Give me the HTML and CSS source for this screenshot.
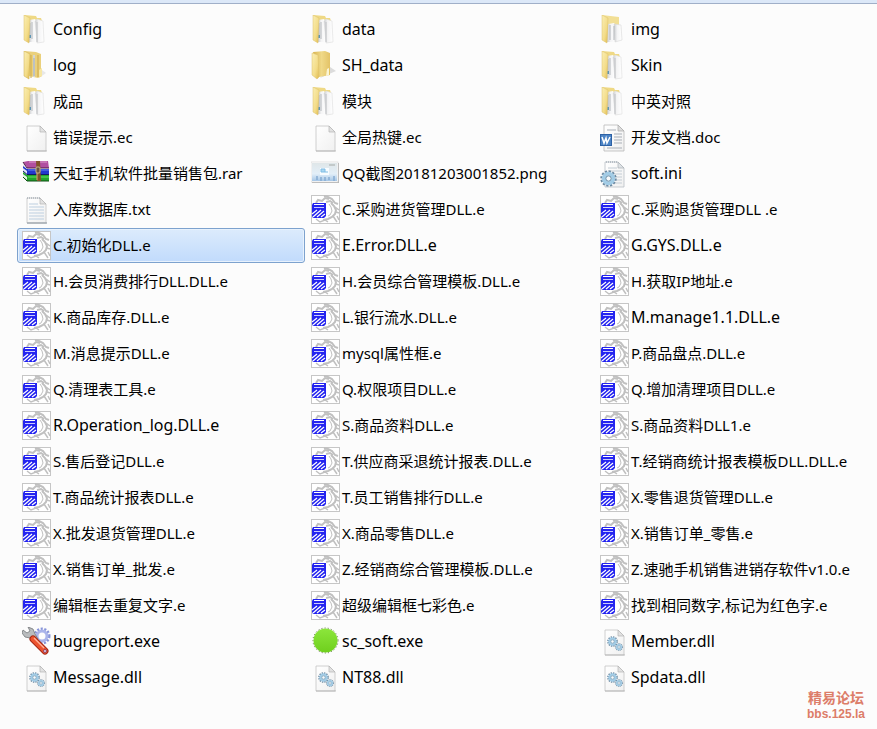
FILE: index.html
```html
<!DOCTYPE html>
<html lang="zh-CN">
<head>
  <meta charset="UTF-8">
  <meta name="viewport" content="width=device-width, initial-scale=1.0">
  <title>文件列表</title>
  <link rel="stylesheet" href="styles.css">
</head>
<body>
  <!-- icon set -->
  <svg class="defs" aria-hidden="true">
    <defs>
      <linearGradient id="flap" x1="0" y1="0" x2="1" y2="1">
        <stop offset="0" stop-color="#faeeb4"/>
        <stop offset="0.6" stop-color="#f3dc88"/>
        <stop offset="1" stop-color="#dfb94e"/>
      </linearGradient>
      <linearGradient id="gold" x1="0" y1="0" x2="1" y2="0">
        <stop offset="0" stop-color="#d9b450"/>
        <stop offset="0.5" stop-color="#f0d988"/>
        <stop offset="1" stop-color="#e3c367"/>
      </linearGradient>
      <linearGradient id="sheet" x1="0" y1="0" x2="1" y2="1">
        <stop offset="0" stop-color="#ffffff"/>
        <stop offset="1" stop-color="#f0f0f0"/>
      </linearGradient>
      <linearGradient id="paper" x1="0" y1="0" x2="1" y2="0">
        <stop offset="0" stop-color="#c9cbce"/>
        <stop offset="0.4" stop-color="#f4f4f5"/>
        <stop offset="1" stop-color="#ffffff"/>
      </linearGradient>
      <linearGradient id="green" x1="0" y1="0" x2="0" y2="1">
        <stop offset="0" stop-color="#8ce63c"/>
        <stop offset="1" stop-color="#6fcf1d"/>
      </linearGradient>
      <linearGradient id="shot" x1="0" y1="0" x2="0" y2="1">
        <stop offset="0" stop-color="#dfe6e8"/>
        <stop offset="0.6" stop-color="#e3eff8"/>
        <stop offset="1" stop-color="#a5c6e6"/>
      </linearGradient>
    </defs>

    <symbol id="folder-files" viewBox="0 0 29 29">
      <path d="M2 0L14 1L15 3H19L20 6V24L7 25Z" fill="#efd985"/>
      <path d="M7 5L13 4L15 7V27L7 27Z" fill="url(#paper)"/>
      <path d="M8 8V23M10 7V24" stroke="#b4b8bc"/>
      <path d="M8 20V23" stroke="#5e96b5" stroke-width="2"/>
      <path d="M13 6L15 4L21 6L22 27L15 28Z" fill="url(#paper)" stroke="#dedede" stroke-width="0.6"/>
      <path d="M15 7V27" stroke="#bfc1c4"/>
      <path d="M2 0L8 3L7 28L2 25Z" fill="url(#flap)" stroke="#dcc06a" stroke-width="0.5"/>
    </symbol>

    <symbol id="folder-log" viewBox="0 0 29 29">
      <path d="M17 27L24 22L20 19Z" fill="#e8e8e8"/>
      <path d="M2 0L14 1L19 3V17L20 25L16 27L7 25Z" fill="#ead07c"/>
      <path d="M9 4V27M16 4V26" stroke="#cfa946"/>
      <path d="M12 4V26" stroke="#d5d6d2" stroke-width="2"/>
      <path d="M12 7V25" stroke="#a5adb4"/>
      <path d="M17 19L20 17V25L17 26Z" fill="#f7e7a6"/>
      <path d="M2 0L8 3L7 28L2 25Z" fill="url(#flap)" stroke="#cfae4c" stroke-width="0.5"/>
    </symbol>

    <symbol id="folder-plain" viewBox="0 0 29 29">
      <path d="M9 27L25 20L19 16Z" fill="#dcdcdc"/>
      <path d="M2 1L14 0L19 2V24L8 26Z" fill="url(#gold)"/>
      <path d="M16 18L18 17V24L15 25Z" fill="#fbf5d4"/>
      <path d="M1 2L7 4L8 26L6 28L1 24Z" fill="url(#flap)" stroke="#dcc06a" stroke-width="0.5"/>
    </symbol>

    <symbol id="folder-tall" viewBox="0 0 29 29">
      <path d="M2 0L19 2V22L7 25Z" fill="#f2df95"/>
      <path d="M8 9L14 8L16 11V27L7 27Z" fill="url(#paper)"/>
      <path d="M14 9L21 10L22 25L15 27Z" fill="url(#paper)" stroke="#d8d8d8" stroke-width="0.6"/>
      <path d="M10 10V25M14 11V25" stroke="#b2b5b9"/>
      <path d="M2 0L8 3L7 28L2 25Z" fill="url(#flap)" stroke="#dcc06a" stroke-width="0.5"/>
    </symbol>

    <symbol id="page" viewBox="0 0 29 29">
      <path d="M5 3H18L24 9V28H5Z" fill="url(#sheet)" stroke="#c4c4c4" stroke-width="0.8"/>
      <path d="M5 28H25" stroke="#a9a9a9" stroke-width="0.7"/>
      <path d="M18 3V9H24Z" fill="#e2e2e2" stroke="#b5b5b5" stroke-width="0.7"/>
    </symbol>

    <symbol id="text" viewBox="0 0 29 29">
      <use href="#page"/>
      <path d="M7 9H16M7 12H22M7 15H22M7 18H22M7 21H22M7 24H22" stroke="#bdcfe0"/>
      <path d="M5 3H18" stroke="#8d9aa6" stroke-dasharray="1 1"/>
      <path d="M5 28H25" stroke="#9aa5af"/>
    </symbol>

    <symbol id="word" viewBox="0 0 29 29">
      <path d="M4 2H18L24 8V28H4Z" fill="url(#sheet)" stroke="#b9b9b9" stroke-width="0.8"/>
      <path d="M18 2V8H24Z" fill="#dddddd" stroke="#ababab" stroke-width="0.7"/>
      <path d="M7 7H16M14 11H22M14 14H22M14 17H22M14 20H22M7 25H22" stroke="#a9afb7"/>
      <rect x="0" y="11" width="12" height="12" fill="#2d61a5"/>
      <rect x="1" y="12" width="10" height="10" fill="#4b83c5"/>
      <path d="M2 14L4 20L6 15L7 20L10 14" fill="none" stroke="#ffffff" stroke-width="1.500"/>
    </symbol>

    <symbol id="gear" viewBox="0 0 16 16">
      <circle cx="8" cy="8" r="6.500" fill="none" stroke="#6c8aa2" stroke-width="2.500" stroke-dasharray="2 1.400"/>
      <circle cx="8" cy="8" r="4.500" fill="none" stroke="#a2cce6" stroke-width="3.500"/>
      <circle cx="8" cy="8" r="2.500" fill="#f7fafc" stroke="#5f87a3" stroke-width="0.9"/>
    </symbol>

    <symbol id="settings" viewBox="0 0 29 29">
      <path d="M5 3H18L24 9V28H5Z" fill="url(#sheet)" stroke="#b9bfc5" stroke-width="0.8"/>
      <path d="M18 3V9H24Z" fill="#dfe3e6" stroke="#a9afb4" stroke-width="0.7"/>
      <path d="M6 3H18" stroke="#8d9aa6" stroke-dasharray="1 1"/>
      <path d="M8 9H17M8 12H22M12 15H22M14 18H22M14 21H22M14 24H22" stroke="#c3ccd4"/>
      <use href="#gear" x="0" y="11" width="17" height="17"/>
    </symbol>

    <symbol id="dll" viewBox="0 0 29 29">
      <use href="#page"/>
      <use href="#gear" x="7" y="9" width="11" height="11"/>
      <use href="#gear" x="15" y="16" width="8" height="8"/>
    </symbol>

    <symbol id="archive" viewBox="0 0 29 29">
      <path d="M1 3L6 2H26L27 9H5Z" fill="#b14fa0"/>
      <path d="M7 3H25" stroke="#dc9dcb"/>
      <path d="M1 3L5 8V10L1 7Z" fill="#ece6ea"/>
      <path d="M1 7L5 10H27V15H5L1 12Z" fill="#2238cc"/>
      <path d="M6 11H27" stroke="#6a84f2"/>
      <path d="M1 9L5 12V15L1 12Z" fill="#dfe4f7"/>
      <path d="M1 13L5 16H27V22H5L1 18Z" fill="#22a52c"/>
      <path d="M6 18H27" stroke="#66e366"/>
      <path d="M1 15L5 18V21L1 18Z" fill="#e1f2e2"/>
      <path d="M1 3L5 9H27" fill="none" stroke="#4c1a45"/>
      <path d="M1 12L5 15.500H27" fill="none" stroke="#101a66"/>
      <path d="M1 18L5 22H27" fill="none" stroke="#0c4a12"/>
      <path d="M14 2H18L19 22H15Z" fill="#80532a"/>
      <path d="M15 13V21" stroke="#d7a868"/>
      <rect x="14" y="8" width="4" height="6" rx="1" fill="#69563f" stroke="#c9b78c"/>
    </symbol>

    <symbol id="image" viewBox="0 0 29 29">
      <rect x="1" y="4" width="27" height="20" fill="#b5b5b5"/>
      <rect x="0" y="3" width="27" height="20" fill="#ffffff" stroke="#d0d0d0" stroke-width="0.6"/>
      <rect x="1" y="4" width="25" height="18" fill="url(#shot)"/>
      <rect x="9" y="9" width="9" height="7" fill="#f8fcff"/>
      <path d="M10 10H14V13H10ZM14 13H17" stroke="#80bde4" fill="#a9d7f2"/>
      <path d="M18 6H24" stroke="#a5aaa8"/>
      <path d="M6 17V21M10 18V22M14 18V22M18 18V21M23 17V22" stroke="#87acd2" stroke-width="1.500"/>
    </symbol>

    <!-- .e source file: grey dragon with the blue block in front -->
    <symbol id="esource" viewBox="0 0 29 29">
      <rect x="0.5" y="0.5" width="28" height="28" fill="#ffffff" stroke="#c6c6c6"/>
      <g fill="none" stroke="#c0c0c0">
        <path d="M5 8L7 5L11 6L14 3L18 4" stroke-width="2"/>
        <path d="M13 1L17 2L21 4L24 8L27 9" stroke-width="2"/>
        <path d="M15 7L19 6L22 8" stroke-width="2"/>
        <path d="M20 8L23 11L25 15L24 19L21 22L17 24L12 25" stroke-width="2"/>
        <path d="M18 9L20 12L21 16L19 20L17 21" stroke-width="1"/>
        <path d="M24 12L28 15M25 17L28 18M22 21L26 27M26 21L28 25" stroke-width="1.500"/>
        <path d="M5 24L9 27L14 25L17 27" stroke-width="1.500"/>
      </g>
      <!-- block top -->
      <path d="M2 8H15V14H1V10Z" fill="#2424f0"/>
      <path d="M3 9.500H13" stroke="#ffffff"/>
      <path d="M3 12.500H13" stroke="#c9c9ff"/>
      <!-- block strokes -->
      <path d="M1 14H15V21L13 23H2L1 21Z" fill="#2424f0"/>
      <path d="M1 19L6 15M2 22L10 15M6 22L13 16M10 22L14 19" stroke="#ffffff" stroke-width="1.200"/>
    </symbol>

    <symbol id="tools" viewBox="0 0 29 29">
      <circle cx="20" cy="9" r="7" fill="none" stroke="#8794d8" stroke-width="3" stroke-dasharray="2 1.500"/>
      <circle cx="20" cy="9" r="5" fill="none" stroke="#aab4ea" stroke-width="3"/>
      <path d="M1 3L5 6L8 4L6 0L11 2L13 7L16 12L12 15L8 11L3 10L0 6Z" fill="#b9bcbe" stroke="#73777a" stroke-width="0.8"/>
      <path d="M11 12L23 24" stroke="#a52814" stroke-width="7" stroke-linecap="round"/>
      <path d="M11 12L23 24" stroke="#ec5430" stroke-width="5" stroke-linecap="round"/>
      <path d="M12 11L22 21" stroke="#ffb59c" stroke-width="1.200"/>
      <circle cx="23" cy="24" r="1.500" fill="#e8dcf0" stroke="#7b315f" stroke-width="0.8"/>
    </symbol>

    <symbol id="circle" viewBox="0 0 29 29">
      <circle cx="14.500" cy="13.500" r="12.500" fill="none" stroke="#56683d" stroke-dasharray="1 2.200"/>
      <circle cx="14.500" cy="13.500" r="12" fill="url(#green)"/>
    </symbol>
  </svg>

  <div class="toolbar-edge"></div>

  <main>
    <ul class="files">
      <li class="file"><svg class="icon"><use href="#folder-files"/></svg><span class="name latin">Config</span></li>
      <li class="file"><svg class="icon"><use href="#folder-files"/></svg><span class="name latin">data</span></li>
      <li class="file"><svg class="icon"><use href="#folder-tall"/></svg><span class="name latin">img</span></li>

      <li class="file"><svg class="icon"><use href="#folder-log"/></svg><span class="name latin">log</span></li>
      <li class="file"><svg class="icon"><use href="#folder-plain"/></svg><span class="name latin">SH_data</span></li>
      <li class="file"><svg class="icon"><use href="#folder-files"/></svg><span class="name latin">Skin</span></li>

      <li class="file"><svg class="icon"><use href="#folder-files"/></svg><span class="name">成品</span></li>
      <li class="file"><svg class="icon"><use href="#folder-files"/></svg><span class="name">模块</span></li>
      <li class="file"><svg class="icon"><use href="#folder-files"/></svg><span class="name">中英对照</span></li>

      <li class="file"><svg class="icon"><use href="#page"/></svg><span class="name">错误提示.ec</span></li>
      <li class="file"><svg class="icon"><use href="#page"/></svg><span class="name">全局热键.ec</span></li>
      <li class="file"><svg class="icon"><use href="#word"/></svg><span class="name">开发文档.doc</span></li>

      <li class="file"><svg class="icon"><use href="#archive"/></svg><span class="name">天虹手机软件批量销售包.rar</span></li>
      <li class="file"><svg class="icon"><use href="#image"/></svg><span class="name">QQ截图20181203001852.png</span></li>
      <li class="file"><svg class="icon"><use href="#settings"/></svg><span class="name latin">soft.ini</span></li>

      <li class="file"><svg class="icon"><use href="#text"/></svg><span class="name">入库数据库.txt</span></li>
      <li class="file"><svg class="icon"><use href="#esource"/></svg><span class="name">C.采购进货管理DLL.e</span></li>
      <li class="file"><svg class="icon"><use href="#esource"/></svg><span class="name">C.采购退货管理DLL .e</span></li>

      <li class="file selected"><svg class="icon"><use href="#esource"/></svg><span class="name">C.初始化DLL.e</span></li>
      <li class="file"><svg class="icon"><use href="#esource"/></svg><span class="name latin">E.Error.DLL.e</span></li>
      <li class="file"><svg class="icon"><use href="#esource"/></svg><span class="name latin">G.GYS.DLL.e</span></li>

      <li class="file"><svg class="icon"><use href="#esource"/></svg><span class="name">H.会员消费排行DLL.DLL.e</span></li>
      <li class="file"><svg class="icon"><use href="#esource"/></svg><span class="name">H.会员综合管理模板.DLL.e</span></li>
      <li class="file"><svg class="icon"><use href="#esource"/></svg><span class="name">H.获取IP地址.e</span></li>

      <li class="file"><svg class="icon"><use href="#esource"/></svg><span class="name">K.商品库存.DLL.e</span></li>
      <li class="file"><svg class="icon"><use href="#esource"/></svg><span class="name">L.银行流水.DLL.e</span></li>
      <li class="file"><svg class="icon"><use href="#esource"/></svg><span class="name latin">M.manage1.1.DLL.e</span></li>

      <li class="file"><svg class="icon"><use href="#esource"/></svg><span class="name">M.消息提示DLL.e</span></li>
      <li class="file"><svg class="icon"><use href="#esource"/></svg><span class="name">mysql属性框.e</span></li>
      <li class="file"><svg class="icon"><use href="#esource"/></svg><span class="name">P.商品盘点.DLL.e</span></li>

      <li class="file"><svg class="icon"><use href="#esource"/></svg><span class="name">Q.清理表工具.e</span></li>
      <li class="file"><svg class="icon"><use href="#esource"/></svg><span class="name">Q.权限项目DLL.e</span></li>
      <li class="file"><svg class="icon"><use href="#esource"/></svg><span class="name">Q.增加清理项目DLL.e</span></li>

      <li class="file"><svg class="icon"><use href="#esource"/></svg><span class="name latin">R.Operation_log.DLL.e</span></li>
      <li class="file"><svg class="icon"><use href="#esource"/></svg><span class="name">S.商品资料DLL.e</span></li>
      <li class="file"><svg class="icon"><use href="#esource"/></svg><span class="name">S.商品资料DLL1.e</span></li>

      <li class="file"><svg class="icon"><use href="#esource"/></svg><span class="name">S.售后登记DLL.e</span></li>
      <li class="file"><svg class="icon"><use href="#esource"/></svg><span class="name">T.供应商采退统计报表.DLL.e</span></li>
      <li class="file"><svg class="icon"><use href="#esource"/></svg><span class="name">T.经销商统计报表模板DLL.DLL.e</span></li>

      <li class="file"><svg class="icon"><use href="#esource"/></svg><span class="name">T.商品统计报表DLL.e</span></li>
      <li class="file"><svg class="icon"><use href="#esource"/></svg><span class="name">T.员工销售排行DLL.e</span></li>
      <li class="file"><svg class="icon"><use href="#esource"/></svg><span class="name">X.零售退货管理DLL.e</span></li>

      <li class="file"><svg class="icon"><use href="#esource"/></svg><span class="name">X.批发退货管理DLL.e</span></li>
      <li class="file"><svg class="icon"><use href="#esource"/></svg><span class="name">X.商品零售DLL.e</span></li>
      <li class="file"><svg class="icon"><use href="#esource"/></svg><span class="name">X.销售订单_零售.e</span></li>

      <li class="file"><svg class="icon"><use href="#esource"/></svg><span class="name">X.销售订单_批发.e</span></li>
      <li class="file"><svg class="icon"><use href="#esource"/></svg><span class="name">Z.经销商综合管理模板.DLL.e</span></li>
      <li class="file"><svg class="icon"><use href="#esource"/></svg><span class="name">Z.速驰手机销售进销存软件v1.0.e</span></li>

      <li class="file"><svg class="icon"><use href="#esource"/></svg><span class="name">编辑框去重复文字.e</span></li>
      <li class="file"><svg class="icon"><use href="#esource"/></svg><span class="name">超级编辑框七彩色.e</span></li>
      <li class="file"><svg class="icon"><use href="#esource"/></svg><span class="name">找到相同数字,标记为红色字.e</span></li>

      <li class="file"><svg class="icon"><use href="#tools"/></svg><span class="name latin">bugreport.exe</span></li>
      <li class="file"><svg class="icon"><use href="#circle"/></svg><span class="name latin">sc_soft.exe</span></li>
      <li class="file"><svg class="icon"><use href="#dll"/></svg><span class="name latin">Member.dll</span></li>

      <li class="file"><svg class="icon"><use href="#dll"/></svg><span class="name latin">Message.dll</span></li>
      <li class="file"><svg class="icon"><use href="#dll"/></svg><span class="name latin">NT88.dll</span></li>
      <li class="file"><svg class="icon"><use href="#dll"/></svg><span class="name latin">Spdata.dll</span></li>
    </ul>
  </main>

  <div class="watermark">
    <span class="forum">精易论坛</span>
    <span class="site">bbs.125.la</span>
  </div>
</body>
</html>
```
FILE: styles.css
```css
* {
  box-sizing: border-box;
}

body {
  margin: 0;
  min-height: 100vh;
  background-color: #fcfcfc;
  color: #000;
  font-family: "Noto Sans", "Noto Sans CJK SC", sans-serif;
  font-size: 15px;
  line-height: 20px;
  overflow-x: hidden;
}

.defs {
  position: absolute;
  width: 0;
  height: 0;
}

.toolbar-edge {
  height: 4px;
  background-color: #dce8f8;
  border-bottom: 1px solid #a0afc8;
}

/* the last column runs a little past the window edge */
.files {
  display: grid;
  grid-template-columns: repeat(3, minmax(0, 1fr));
  row-gap: 1px;
  margin: 8px -7px 0 0;
  padding: 0 0 0 17px;
  list-style: none;
}

.file {
  display: flex;
  align-items: center;
  gap: 2px;
  height: 35px;
  margin-right: 1px;
  padding-left: 5px;
  white-space: nowrap;
}

.selected {
  border: 1px solid #7da2ce;
  border-radius: 3px;
  padding-left: 4px;
  background-image: linear-gradient(#dcebfc, #c1dbfc);
  box-shadow: inset 0 0 0 1px #e8f2fd;
}

.icon {
  flex: none;
  width: 29px;
  height: 29px;
}

.name {
  padding-bottom: 2px;
}

.latin {
  font-size: 16px;
}

.watermark {
  position: absolute;
  right: 12px;
  bottom: 8px;
  display: flex;
  flex-direction: column;
  align-items: center;
  gap: 2px;
  color: #dc7d69;
  font-weight: bold;
}

.forum {
  font-family: "Noto Sans CJK SC", sans-serif;
  font-size: 14px;
  line-height: 16px;
}

.site {
  font-family: "Liberation Sans", sans-serif;
  font-size: 12px;
  line-height: 14px;
}
```
